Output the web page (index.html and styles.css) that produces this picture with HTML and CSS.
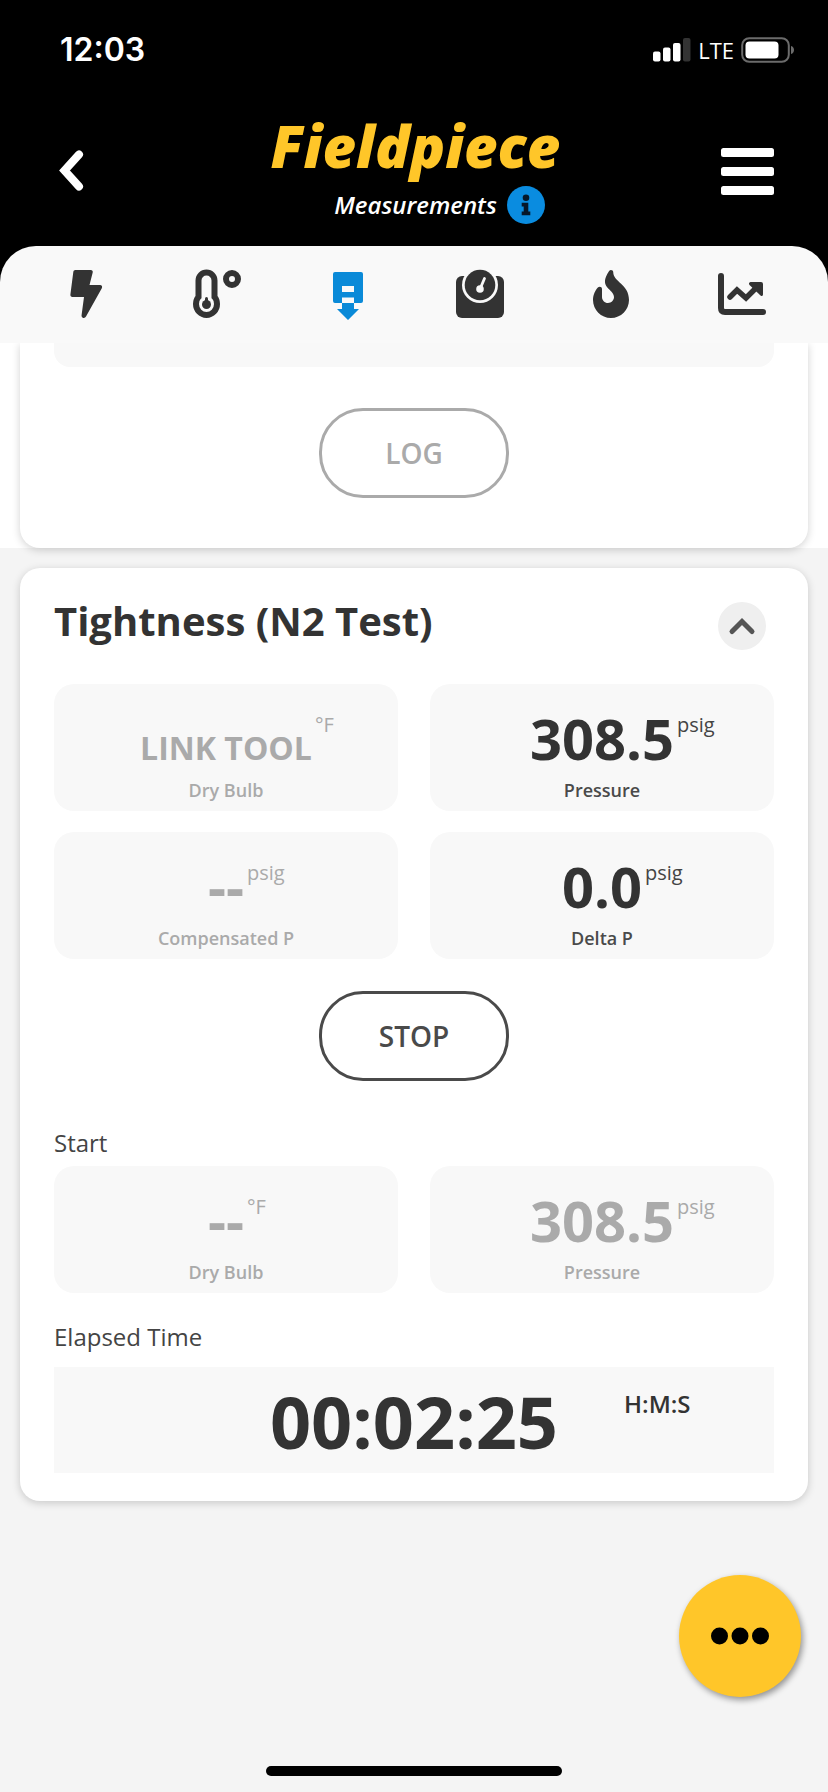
FILE: index.html
```html
<!DOCTYPE html>
<html lang="en">
<head>
<meta charset="utf-8">
<meta name="viewport" content="width=device-width, initial-scale=1">
<title>Fieldpiece Measurements</title>
<link rel="stylesheet" href="styles.css">
</head>
<body>
<header class="top">
  <div class="status">
    <span class="clock">12:03</span>
    <div class="status-right">
      <svg width="38" height="24" viewBox="0 0 38 24" fill="#fff" aria-hidden="true">
        <rect x="0" y="13.500" width="7.500" height="10" rx="2"/><rect x="10" y="9.500" width="7.500" height="14" rx="2"/><rect x="20" y="5" width="7.500" height="18.500" rx="2"/><rect x="30" y="0" width="7.500" height="23.500" rx="2" fill="#333"/>
      </svg>
      <span class="network">LTE</span>
      <svg width="54" height="26" viewBox="0 0 54 26" aria-hidden="true">
        <rect x="1.200" y="1.200" width="46.600" height="23.600" rx="7" fill="none" stroke="#6b6b6b" stroke-width="2"/>
        <rect x="4.500" y="4.500" width="33" height="17" rx="4" fill="#fff"/>
        <path d="M50 9c4 1 4 7 0 8z" fill="#6b6b6b"/>
      </svg>
    </div>
  </div>
  <div class="bar">
    <button class="icon-btn" aria-label="Back">
      <svg width="28" height="44" viewBox="0 0 28 44" fill="none" stroke="#fff" stroke-width="8" stroke-linecap="round" stroke-linejoin="miter" aria-hidden="true"><path d="M22 5.500L7.500 21.500l14.500 16"/></svg>
    </button>
    <div class="brand">
      <div class="logo">Fieldpiece</div>
      <div class="subtitle">
        <h1 class="page-name">Measurements</h1>
        <button class="icon-btn" aria-label="Information">
          <svg width="38" height="38" viewBox="0 0 38 38" aria-hidden="true"><circle cx="19" cy="19" r="19" fill="#0a8ce0"/><g fill="#06182b"><circle cx="19" cy="11.800" r="3.300"/><path d="M14.700 16.800h6.600v8.600h2v3.800h-8.600v-3.800h2v-4.800h-2z"/></g></svg>
        </button>
      </div>
    </div>
    <button class="icon-btn menu" aria-label="Menu">
      <svg width="54" height="48" viewBox="0 0 54 48" fill="#fff" aria-hidden="true"><rect x="1" y="1" width="53" height="9" rx="2.500"/><rect x="1" y="20" width="53" height="9" rx="2.500"/><rect x="1" y="39" width="53" height="9" rx="2.500"/></svg>
    </button>
  </div>
  <nav class="tabs">
    <button class="tab" aria-label="Electrical"><svg width="48" height="48" viewBox="0 0 48 48" fill="#333" aria-hidden="true"><path d="M13.500 0h15.200c1.500 0 2.400 1.200 2 2.600L27.500 15H38c1.800 0 2.700 1.700 1.800 3.200L24 46.600c-.6 1.100-1.600 1.500-2.700 1.300-1.400-.3-2-1.400-1.700-2.800L22 27H10.500c-1.500 0-2.300-1-2.100-2.400L11.300 2C11.400.7 12.200 0 13.500 0z"/></svg></button>
    <button class="tab" aria-label="Temperature"><svg width="48" height="48" viewBox="0 0 48 48" fill="none" stroke="#333" aria-hidden="true"><path d="M5.500 27V10.500a8 8 0 0 1 16 0V27c2 2 2.500 4.500 2.500 7a10.500 11 0 0 1-21 0c0-2.500.5-5 2.500-7z" stroke-width="6"/><circle cx="13.500" cy="34.500" r="4.500" fill="#333" stroke="none"/><path d="M13.500 28.500v5" stroke-width="3" stroke-linecap="round"/><circle cx="39" cy="9" r="6" stroke-width="6"/></svg></button>
    <button class="tab" aria-label="Pressure" aria-current="page"><svg width="48" height="48" viewBox="0 0 48 48" fill="#0a8ad8" aria-hidden="true"><path d="M11 2h26q2 0 2 2v27q0 2-2 2h-7V16H18v17h-7q-2 0-2-2V4q0-2 2-2z"/><path d="M18 22h12v5.500H18zM18 33h12v6h5L24 50 13 39h5z"/></svg></button>
    <button class="tab" aria-label="Weight"><svg width="48" height="48" viewBox="0 0 48 48" aria-hidden="true"><rect x="0" y="6" width="48" height="42" rx="6" fill="#333"/><circle cx="24" cy="15" r="18" fill="#f9f9f9"/><circle cx="24" cy="15" r="15.300" fill="#333"/><path d="M24 19l4.500-10.500" stroke="#f9f9f9" stroke-width="2.800" stroke-linecap="round"/><circle cx="24" cy="19" r="3.800" fill="#f9f9f9"/></svg></button>
    <button class="tab" aria-label="Combustion"><svg width="48" height="48" viewBox="0 0 384 512" fill="#333" aria-hidden="true"><path d="M216 23.860c0-23.800-30.650-32.770-44.150-13.040C48 191.850 224 200 224 288c0 35.630-29.110 64.460-64.850 63.990-35.170-.45-63.150-29.770-63.150-64.940v-85.510c0-21.700-26.470-32.230-41.430-16.500C27.800 213.160 0 261.330 0 320c0 105.870 86.130 192 192 192s192-86.130 192-192c0-170.290-168-193-168-296.140z"/></svg></button>
    <button class="tab" aria-label="Trends"><svg width="48" height="48" viewBox="0 0 48 48" fill="none" stroke="#333" stroke-linecap="round" aria-hidden="true"><path d="M3 6v32q0 4 4 4h38" stroke-width="6"/><path d="M12 27l7-7 9 8 11-11" stroke-width="5.500"/><path d="M32.500 12H43q2 0 2 2v10.500q-.5 2.500-2.500 1L31.500 15q-1.500-2 1-3z" fill="#333" stroke="none"/></svg></button>
  </nav>
</header>

<main>
  <div class="previous">
    <section class="card card-tail" aria-label="Previous test">
      <div class="tile-tail"></div>
      <button class="pill" disabled>LOG</button>
    </section>
  </div>

  <section class="card">
    <div class="card-head">
      <h2 class="card-title">Tightness (N2 Test)</h2>
      <button class="collapse" aria-label="Collapse">
        <svg width="28" height="20" viewBox="0 0 28 20" fill="none" stroke="#555" stroke-width="5" stroke-linecap="round" aria-hidden="true"><path d="M4 15.500L14 5.500l10 10"/></svg>
      </button>
    </div>
    <div class="grid">
      <div class="tile muted"><div class="value"><span class="value-text">LINK TOOL</span><span class="unit">°F</span></div><div class="label">Dry Bulb</div></div>
      <div class="tile"><div class="value">308.5<span class="unit">psig</span></div><div class="label">Pressure</div></div>
      <div class="tile muted"><div class="value">--<span class="unit">psig</span></div><div class="label">Compensated P</div></div>
      <div class="tile"><div class="value">0.0<span class="unit">psig</span></div><div class="label">Delta P</div></div>
    </div>
    <button class="pill">STOP</button>
    <h3 class="section-name">Start</h3>
    <div class="grid">
      <div class="tile muted"><div class="value">--<span class="unit">°F</span></div><div class="label">Dry Bulb</div></div>
      <div class="tile muted"><div class="value">308.5<span class="unit">psig</span></div><div class="label">Pressure</div></div>
    </div>
    <h3 class="section-name elapsed-name">Elapsed Time</h3>
    <div class="elapsed">
      <span class="elapsed-value">00:02:25</span>
      <span class="elapsed-unit">H:M:S</span>
    </div>
  </section>
</main>

<button class="fab" aria-label="More actions">
  <svg width="58" height="18" viewBox="0 0 58 18" aria-hidden="true"><circle cx="8.500" cy="9" r="8.500"/><circle cx="29" cy="9" r="8.500"/><circle cx="49.500" cy="9" r="8.500"/></svg>
</button>
<div class="home-indicator"></div>
</body>
</html>
```
FILE: styles.css
```css
* { box-sizing: border-box; }

body {
  margin: 0;
  min-height: 100vh;
  background: #f4f4f4;
  color: #333;
  font-family: "Open Sans", "Noto Sans", sans-serif;
}

h1, h2, h3 { margin: 0; }

button {
  font-family: inherit;
  border: 0;
  padding: 0;
  background: none;
  color: inherit;
}

svg { display: block; }

.top {
  position: relative;
  z-index: 1;
  background: #000;
  color: #fff;
}

.status {
  display: flex;
  justify-content: space-between;
  align-items: center;
  height: 100px;
  padding: 0 33px 0 60px;
}

.clock { font: 600 32px/40px Inter, sans-serif; }

.status-right { display: flex; align-items: center; gap: 7px; }

.network { font-size: 22px; line-height: 32px; }

.bar {
  display: grid;
  grid-template-columns: 1fr auto 1fr;
  align-items: center;
  height: 146px;
  padding: 0 54px 4px 57px;
}

.icon-btn { justify-self: start; }
.menu { justify-self: end; }

.brand { display: grid; justify-items: center; gap: 12px; }

.logo {
  font-size: 58px;
  line-height: 56px;
  font-style: italic;
  font-weight: 800;
  color: #ffc629;
}

.subtitle {
  display: grid;
  grid-template-columns: 1fr auto 1fr;
  align-items: center;
  column-gap: 10px;
  width: 100%;
}

.page-name {
  grid-column: 2;
  font-size: 24px;
  line-height: 32px;
  font-style: italic;
  font-weight: 600;
}

.tabs {
  display: grid;
  grid-template-columns: repeat(6, 1fr);
  padding: 24px 20px 25px;
  border-radius: 36px 36px 0 0;
  background: #f9f9f9;
}

.tab { justify-self: center; }
.tab svg { overflow: visible; }

.previous { background: #fff; }

.card {
  display: flex;
  flex-direction: column;
  margin: 20px 20px 0;
  padding: 34px 34px 28px;
  border-radius: 20px;
  background: #fff;
  box-shadow: 0 2px 8px rgba(0, 0, 0, 0.18);
}

.card-tail {
  margin-top: 0;
  padding: 0 34px 50px;
  border-radius: 0 0 20px 20px;
}

.tile-tail {
  height: 24px;
  margin-bottom: 41px;
  border-radius: 0 0 16px 16px;
  background: #f8f8f8;
}

.pill {
  align-self: center;
  width: 190px;
  height: 90px;
  border: 3px solid #4a4a4a;
  border-radius: 44px;
  color: #4a4a4a;
  font-size: 28px;
  line-height: 36px;
  font-weight: 600;
}

.pill:disabled { border-color: #aaa; color: #aaa; }

.card-head {
  display: flex;
  justify-content: space-between;
  align-items: center;
  margin-bottom: 34px;
  padding-right: 8px;
}

.card-title {
  margin-top: -10px;
  font-size: 40px;
  line-height: 48px;
  font-weight: 700;
}

.collapse {
  display: grid;
  place-items: center;
  width: 48px;
  height: 48px;
  border-radius: 50%;
  background: #efefef;
}

.grid {
  display: grid;
  grid-template-columns: 1fr 1fr;
  gap: 21px 32px;
}

.tile {
  display: flex;
  flex-direction: column;
  align-items: center;
  gap: 8px;
  padding: 22px 0 9px;
  border-radius: 20px;
  background: #f8f8f8;
}

.value {
  position: relative;
  font-size: 56px;
  line-height: 64px;
  height: 64px;
  font-weight: 700;
}

.value-text { font-size: 32px; }

.unit {
  position: absolute;
  top: 5px;
  left: 100%;
  margin-left: 3px;
  font-size: 20px;
  line-height: 28px;
  font-weight: 500;
  white-space: nowrap;
  color: #444;
}

.label {
  font-size: 18px;
  line-height: 24px;
  font-weight: 600;
  color: #4a4a4a;
}

.muted, .muted .label, .muted .unit { color: #aaa; }

.grid + .pill { margin-top: 32px; }

.section-name {
  margin: 46px 0 7px;
  font-size: 24px;
  line-height: 32px;
  font-weight: 400;
  color: #444;
}

.elapsed-name { margin: 28px 0 14px; }

.elapsed {
  display: grid;
  grid-template-columns: 1fr auto 1fr;
  padding: 9px 0 7px;
  background: #f8f8f8;
}

.elapsed-value {
  grid-column: 2;
  font-size: 72px;
  line-height: 90px;
  font-weight: 700;
}

.elapsed-unit {
  margin: 12px 0 0 66px;
  font-size: 24px;
  line-height: 32px;
  font-weight: 600;
}

.fab {
  position: fixed;
  right: 27px;
  bottom: 95px;
  display: grid;
  place-items: center;
  width: 122px;
  height: 122px;
  border-radius: 50%;
  background: #ffc629;
  box-shadow: 2px 3px 6px rgba(0, 0, 0, 0.4);
}

.home-indicator {
  position: fixed;
  bottom: 16px;
  left: 50%;
  width: 296px;
  height: 10px;
  margin-left: -148px;
  border-radius: 5px;
  background: #000;
}
```
